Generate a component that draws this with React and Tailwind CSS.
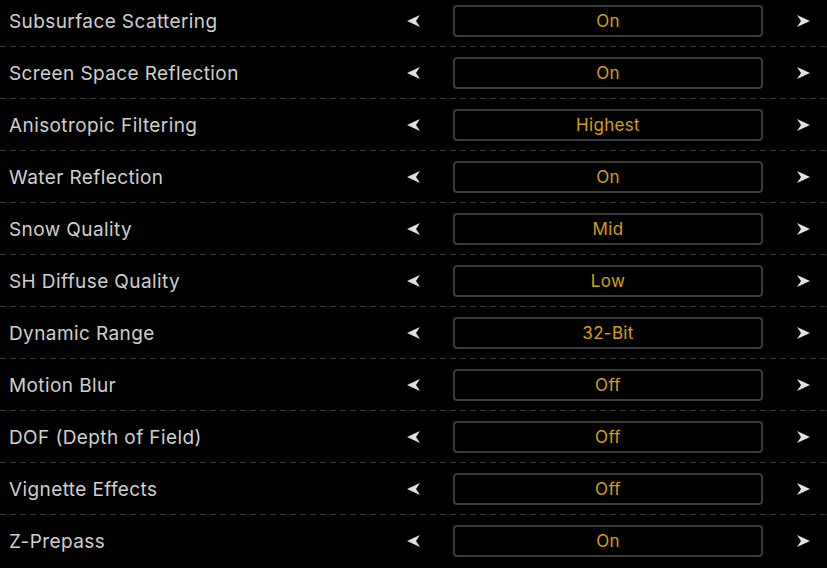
import React from 'react'

const settings = [
  ['Subsurface Scattering', 'On'],
  ['Screen Space Reflection', 'On'],
  ['Anisotropic Filtering', 'Highest'],
  ['Water Reflection', 'On'],
  ['Snow Quality', 'Mid'],
  ['SH Diffuse Quality', 'Low'],
  ['Dynamic Range', '32-Bit'],
  ['Motion Blur', 'Off'],
  ['DOF (Depth of Field)', 'Off'],
  ['Vignette Effects', 'Off'],
  ['Z-Prepass', 'On'],
]

function Arrow({ dir }) {
  return (
    <svg width="13" height="12" viewBox="0 0 13 12" className={dir === 'left' ? 'rotate-180' : ''}>
      <polygon points="0,0 13,6 0,12 4,6" fill="#e0e0e0" />
    </svg>
  )
}

export default function App() {
  return (
    <div className="w-[827px] h-[568px] bg-black overflow-hidden font-['Inter',sans-serif]">
      <div className="-mt-[5px]">
        {settings.map(([label, value], i) => (
          <div key={label} className="relative h-[52px] flex items-center">
            <div className="w-[401px] pl-[9px] text-[19px] tracking-[0.4px] text-[#cfcfcf] leading-none">{label}</div>
            <div className="w-[24px] flex justify-center"><Arrow dir="left" /></div>
            <div className="w-[28px]" />
            <div className="w-[310px] h-[32px] border-2 border-[#3a3a3a] rounded-[4px] flex items-center justify-center text-[17px] tracking-[0.3px] text-[#d4a010] leading-none">
              {value}
            </div>
            <div className="w-[28px]" />
            <div className="w-[24px] flex justify-center"><Arrow dir="right" /></div>
            {i < settings.length - 1 && (
              <div className="absolute left-0 right-0 bottom-[0px] h-px bg-[repeating-linear-gradient(to_right,#363636_0_6px,transparent_6px_10px)]" />
            )}
          </div>
        ))}
      </div>
    </div>
  )
}
